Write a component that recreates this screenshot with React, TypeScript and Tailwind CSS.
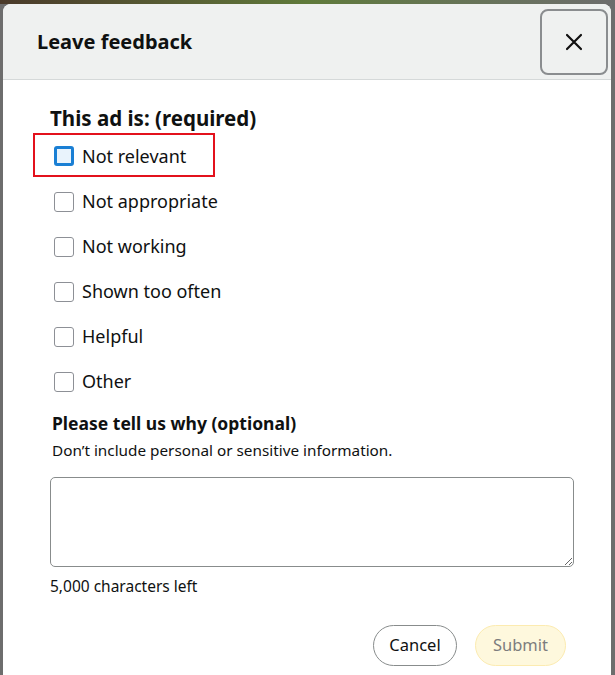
import { useState } from 'react'

const reasons = [
  'Not relevant',
  'Not appropriate',
  'Not working',
  'Shown too often',
  'Helpful',
  'Other',
]

function CheckRow({ label, focused, h = 'h-[45px]' }: { label: string; focused?: boolean; h?: string }) {
  const [checked, setChecked] = useState(false)
  return (
    <label className={`flex items-center gap-[8px] ${h} cursor-pointer`}>
      <span
        onClick={() => setChecked(!checked)}
        className={`w-[20px] h-[20px] rounded-[3px] flex-shrink-0 ${
          focused ? 'border-[3px] border-[#1a7fd4] bg-[#e9f3fc]' : 'border border-[#8d9096] bg-white'
        }`}
      ></span>
      <span className="text-[18px] text-[#0f1111]">{label}</span>
    </label>
  )
}

export default function App() {
  return (
    <div className="w-[615px] h-[675px] overflow-hidden bg-[#6d6d6d] relative font-['Noto_Sans','Liberation_Sans',sans-serif]">
      <div className="h-[4px] bg-gradient-to-r from-[#4a3a2a] via-[#5f7a3a] to-[#6d6d6d]"></div>
      <div className="ml-[3px] mr-[4px] h-[671px] bg-white rounded-t-[8px] overflow-hidden">
        <div className="h-[76px] bg-[#eff1f0] border-b border-[#d5d9d9] flex items-center justify-between pl-[34px] pr-[3px]">
          <h2 className="text-[20px] font-bold text-[#0f1111]">Leave feedback</h2>
          <button className="w-[68px] h-[66px] rounded-[8px] border-2 border-[#8a8d8f] flex items-center justify-center">
            <svg width="18" height="18" viewBox="0 0 18 18" fill="none" stroke="#111" strokeWidth="2.2" strokeLinecap="round">
              <path d="M2 2 L16 16 M16 2 L2 16" />
            </svg>
          </button>
        </div>

        <div className="pl-[47px] pr-[37px] pt-[24px]">
          <div className="text-[20.5px] font-bold text-[#0f1111] leading-[28px]">This ad is: (required)</div>
          <div className="mt-[1px] -ml-[17px]">
            <div className="w-[182px] border-2 border-[#e3111c] pl-[19px] pt-[2px]">
              <CheckRow label={reasons[0]} focused h="h-[38px]" />
            </div>
            <div className="pl-[21px] mt-[2px]">
              {reasons.slice(1).map((r) => (
                <CheckRow key={r} label={r} />
              ))}
            </div>
          </div>

          <div className="mt-[7px] pl-[2px] text-[17.5px] leading-[24px] font-bold text-[#0f1111]">Please tell us why (optional)</div>
          <div className="mt-[5px] pl-[2px] text-[15.3px] leading-[20px] text-[#0f1111]">Don’t include personal or sensitive information.</div>
          <textarea className="mt-[17px] block w-[524px] h-[90px] border border-[#888c8c] rounded-[5px] bg-white"></textarea>
          <div className="mt-[9px] text-[15.5px] leading-[20px] text-[#0f1111]">5,000 characters left</div>

          <div className="mt-[29px] flex justify-end gap-[18px] pr-[8px]">
            <button className="w-[84px] h-[41px] rounded-full border border-[#888c8c] bg-white text-[16.5px] text-[#0f1111]">
              Cancel
            </button>
            <button className="w-[91px] h-[41px] rounded-full border border-[#fcebb0] bg-[#fef8dd] text-[16.5px] text-[#7d7d7d]">
              Submit
            </button>
          </div>
        </div>
      </div>
    </div>
  )
}
